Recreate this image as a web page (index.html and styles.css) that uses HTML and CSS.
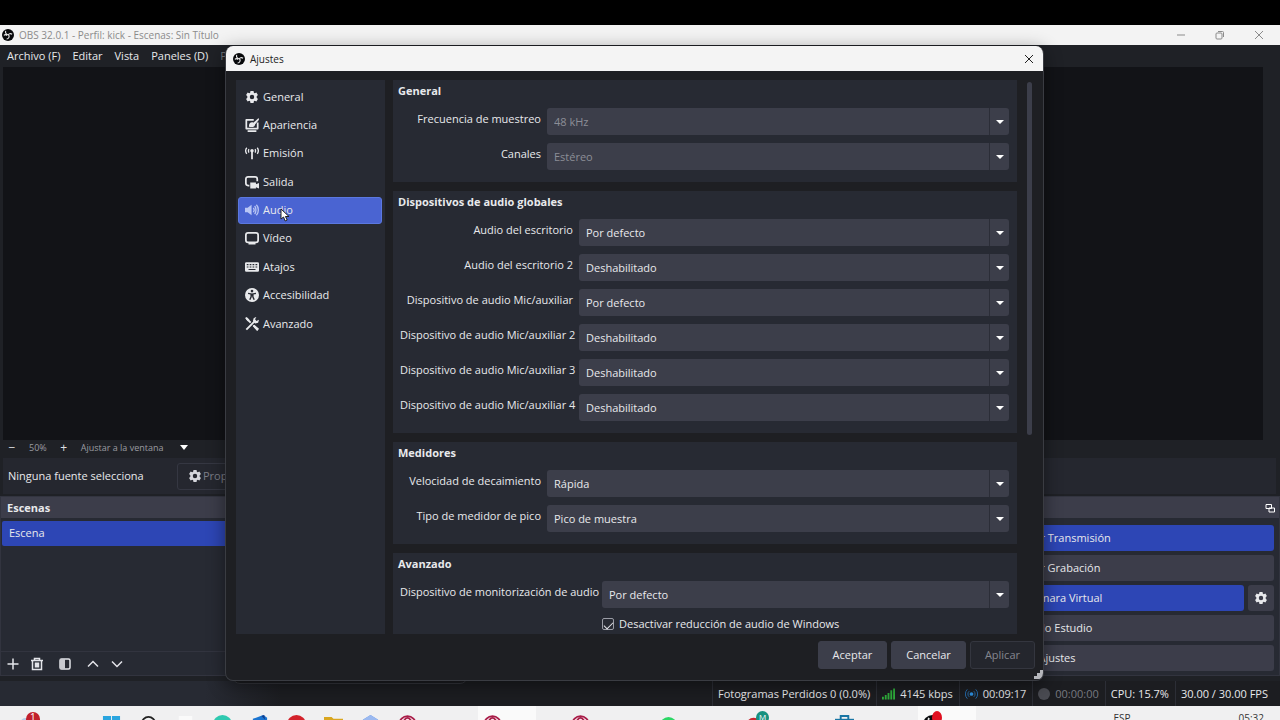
FILE: index.html
```html
<!DOCTYPE html>
<html lang="es">
<head>
<meta charset="UTF-8">
<meta name="viewport" content="width=device-width, initial-scale=1.0">
<title>OBS 32.0.1 - Ajustes</title>
<link rel="stylesheet" href="styles.css">
</head>
<body>
<svg class="defs" aria-hidden="true">
    <symbol id="gear" viewBox="1 1 14 14">
        <path fill-rule="evenodd" fill="currentColor" d="M6.200 1h3.600l.4 2 1 .5 1.900-.7 1.800 3-1.400 1.400v1.600l1.400 1.400-1.800 3-1.900-.7-1 .5-.4 2H6.200l-.4-2-1-.5-1.900.7-1.800-3 1.400-1.400V7.200L1.100 5.800l1.800-3 1.900.7 1-.5zM8 5.400a2.600 2.600 0 1 0 0 5.200 2.600 2.600 0 0 0 0-5.200z"/>
    </symbol>
    <symbol id="obs" viewBox="0 0 16 16">
        <circle cx="8" cy="8" r="8" fill="#08090b"/>
        <path fill="none" stroke="#e8e8e8" stroke-width="1.500" d="M5 2.500c-1 2.300.2 4.600 3 5.200M13.500 7c-2.200-1.500-4.800-.8-5.500 1.700M6.200 13.300c2.500-.2 4-2.500 3-5M2.500 8.500c1.200-1 3-1 4 .2"/>
    </symbol>
    <symbol id="opera" viewBox="0 0 16 16">
        <circle cx="8" cy="8" r="7" fill="#f6e6ea" stroke="#a81c48" stroke-width="1.500"/>
        <ellipse cx="8" cy="8" rx="3.500" ry="5.500" fill="none" stroke="#a81c48" stroke-width="1.500"/>
    </symbol>
</svg>

<div class="letterbox"></div>

<header class="titlebar">
    <svg class="logo"><use href="#obs"/></svg>
    <span class="titlebar-text">OBS 32.0.1 - Perfil: kick - Escenas: Sin Título</span>
    <div class="window-buttons">
        <button aria-label="Minimizar"><svg viewBox="0 0 10 10"><path d="M1 5h8"/></svg></button>
        <button aria-label="Restaurar"><svg viewBox="0 0 10 10"><rect x="1" y="3" width="6" height="6" rx="1"/><path d="M3 1.500h4.500a1 1 0 0 1 1 1V7"/></svg></button>
        <button aria-label="Cerrar"><svg viewBox="0 0 10 10"><path d="M1 1l8 8M9 1L1 9"/></svg></button>
    </div>
</header>

<div class="main-window">
    <nav class="menubar">
        <a href="#">Archivo (F)</a>
        <a href="#">Editar</a>
        <a href="#">Vista</a>
        <a href="#">Paneles (D)</a>
        <a href="#" class="dim">Perfil</a>
    </nav>

    <div class="preview"></div>

    <div class="zoombar">
        <button aria-label="Alejar">−</button>
        <span>50%</span>
        <button aria-label="Acercar">+</button>
        <span class="zoom-mode">Ajustar a la ventana</span>
        <i class="arrow"></i>
    </div>

    <div class="context">
        <span class="context-text">Ninguna fuente selecciona</span>
        <button class="context-button"><svg><use href="#gear"/></svg>Propiedades</button>
    </div>

    <div class="docks">
        <section class="dock scenes">
            <h2>Escenas</h2>
            <ul>
                <li>Escena</li>
            </ul>
            <div class="dock-tools">
                <button aria-label="Añadir"><svg viewBox="0 0 14 14"><path d="M7 1.500v11M1.500 7h11"/></svg></button>
                <button aria-label="Eliminar"><svg viewBox="0 0 14 14"><path d="M1 3.500h12M4.500 3V1.500h5V3M2.500 4v8.500h9V4M5.500 5.500v5M7 5.500v5M8.500 5.500v5"/></svg></button>
                <button aria-label="Filtros" class="wide-tool"><svg viewBox="0 0 14 14"><rect x="2" y="2" width="10" height="10" rx="1.500"/><path fill="#c9cad0" stroke="none" d="M2 2h5v10H2z"/></svg></button>
                <button aria-label="Subir"><svg viewBox="0 0 14 14"><path d="M2 9.500l5-5 5 5"/></svg></button>
                <button aria-label="Bajar"><svg viewBox="0 0 14 14"><path d="M2 4.500l5 5 5-5"/></svg></button>
            </div>
        </section>
        <section class="dock mixer"></section>
        <section class="dock controls">
            <h2>Controles
                <svg class="popout" viewBox="0 0 10 10"><path d="M1 1.500h5.500v4H1zM4 5h5.500v4H4z"/></svg>
            </h2>
            <div class="control-list">
                <button class="on">Detener Transmisión</button>
                <button>Iniciar Grabación</button>
                <div class="control-row">
                    <button class="on">Detener Cámara Virtual</button>
                    <button class="square" aria-label="Configurar cámara virtual"><svg><use href="#gear"/></svg></button>
                </div>
                <button>Modo Estudio</button>
                <button>Ajustes</button>
            </div>
        </section>
    </div>

    <footer class="statusbar">
        <span>Fotogramas Perdidos 0 (0.0%)</span>
        <span><svg class="bars" viewBox="0 0 14 12"><path d="M0 9h2v3H0zM3 7h2v5H3zM6 5h2v7H6zM9 2h2v10H9zM12 0h2v12h-2z"/></svg>4145 kbps</span>
        <span><svg class="live" viewBox="0 0 14 12"><circle cx="7" cy="6" r="2"/><path d="M4.500 3a4 4 0 0 0 0 6M9.500 3a4 4 0 0 1 0 6M2.500 1a7 7 0 0 0 0 10M11.500 1a7 7 0 0 1 0 10"/></svg>00:09:17</span>
        <span class="idle"><i class="dot"></i>00:00:00</span>
        <span>CPU: 15.7%</span>
        <span>30.00 / 30.00 FPS</span>
    </footer>
</div>

<div class="taskbar">
    <div class="weather"><svg viewBox="0 0 24 16"><path fill="#b7cbe6" d="M1 16c0-5 3-9 6-9s6 3 7 9z"/><circle cx="15" cy="8" r="7" fill="#c11f2b"/></svg><span class="count">1</span></div>
    <div class="apps">
        <span><svg viewBox="0 0 20 20"><path fill="#2aa5df" d="M1 1h8.500v8.500H1zM10.500 1H19v8.500h-8.500zM1 10.500h8.500V19H1zM10.500 10.500H19V19h-8.500z"/></svg></span>
        <span><svg viewBox="0 0 20 20"><circle cx="10" cy="9" r="7" fill="none" stroke="#222" stroke-width="2"/></svg></span>
        <span><svg viewBox="0 0 20 20"><rect x="3" y="1" width="14" height="16" fill="#fafafa"/></svg></span>
        <span><svg viewBox="0 0 20 20"><circle cx="10" cy="10" r="10" fill="#2fc9b0"/><path fill="#2b8bd0" d="M0 10c3-6 12-6 15 0z"/></svg></span>
        <span><svg viewBox="0 0 20 20"><path fill="#1b74d0" d="M3 4l11-4 4 3v17H3z"/><path fill="#123d8c" d="M12 1l3-1 1 5z"/></svg></span>
        <span><svg viewBox="0 0 20 20"><circle cx="10" cy="10" r="10" fill="#d3222b"/></svg></span>
        <span><svg viewBox="0 0 20 20"><path fill="#d9a620" d="M0 2h8l2 2h10v16H0z"/><path fill="#f3cb50" d="M0 6h20v14H0z"/></svg></span>
        <span><svg viewBox="0 0 20 20"><path fill="#5c8fe0" d="M10 0l8 5v10l-8 5-8-5V5z"/><path fill="#9bb9f0" d="M10 0l8 5-8 4-8-4z"/></svg></span>
        <span><svg><use href="#opera"/></svg></span>
    </div>
    <div class="apps open">
        <span class="active"><svg><use href="#opera"/></svg></span>
        <span><svg><use href="#opera"/></svg></span>
        <span><svg viewBox="0 0 20 20"><circle cx="10" cy="11" r="9" fill="#2bd765"/></svg></span>
        <span><svg viewBox="0 0 20 20"><circle cx="7" cy="11" r="8" fill="#c9272f"/></svg><b class="badge">M</b></span>
        <span><svg viewBox="0 0 20 20"><path fill="#1976a5" d="M0 4h20v14H0z"/><path fill="none" stroke="#1976a5" stroke-width="2" d="M6 5V1h8v4"/></svg></span>
        <span class="active"><svg><use href="#obs"/></svg><b class="badge rec"></b></span>
    </div>
    <div class="tray"><span>ESP</span><span>05:32</span></div>
</div>

<div class="shadow-window"></div>

<div class="dialog" role="dialog" aria-label="Ajustes">
    <header class="dialog-title">
        <svg class="logo"><use href="#obs"/></svg>
        <span>Ajustes</span>
        <button aria-label="Cerrar"><svg viewBox="0 0 10 10"><path d="M1 1l8 8M9 1L1 9"/></svg></button>
    </header>

    <div class="dialog-body">
        <nav class="sections">
            <div class="section-list">
                <a href="#"><svg viewBox="0 0 14 14"><use href="#gear" x="1" y="1" width="12" height="12"/></svg>General</a>
                <a href="#"><svg viewBox="0 0 16 16"><path fill="none" stroke="currentColor" stroke-width="2" stroke-linejoin="round" d="M10 2H1.500v10h13V5"/><path fill="currentColor" d="M3 14h10v2H3zM15.500 0L16 2l-5 6-2-2zM4.500 9c0-3 2-5 5-4l2 2c0 3-3 4-7 3z"/></svg>Apariencia</a>
                <a href="#"><svg viewBox="0 0 16 16"><g fill="none" stroke="currentColor" stroke-width="1.500"><path d="M2 2a6 6 0 0 0 0 7M14 2a6 6 0 0 1 0 7M4.500 3.500a4 4 0 0 0 0 4M11.500 3.500a4 4 0 0 1 0 4"/><path stroke-width="2" d="M8 6v9"/></g><circle cx="8" cy="5.500" r="2" fill="currentColor"/></svg>Emisión</a>
                <a href="#"><svg viewBox="0 0 16 16"><path fill="none" stroke="currentColor" stroke-width="2" d="M5 12H3.500A2.500 2.500 0 0 1 1 9.500v-5A2.500 2.500 0 0 1 3.500 2h8A2.500 2.500 0 0 1 14 4.500V7"/><path fill="currentColor" d="M6 8.500h6.500v2L16 9v6.500L12.500 14v1.500H6z"/></svg>Salida</a>
                <a href="#" class="current"><svg viewBox="0 0 16 16"><path fill="currentColor" d="M0 5.500h3L7.500 2v12L3 10.500H0z"/><path fill="none" stroke="currentColor" stroke-width="1.500" d="M9.500 5.500a4 4 0 0 1 0 5M11 3.500c2 2 2 7 0 9M13 2c3 3 3 9 0 12"/></svg>Audio</a>
                <a href="#"><svg viewBox="0 0 16 16"><rect x="1" y="2" width="14" height="11" rx="2.500" fill="none" stroke="currentColor" stroke-width="2"/><path fill="currentColor" d="M4 13h8v2.500H4z"/></svg>Vídeo</a>
                <a href="#"><svg viewBox="0 0 16 16"><path fill="currentColor" fill-rule="evenodd" d="M1.500 2.500h13A1.500 1.500 0 0 1 16 4v8a1.500 1.500 0 0 1-1.500 1.500h-13A1.500 1.500 0 0 1 0 12V4a1.500 1.500 0 0 1 1.500-1.500zM2 4.500V6h2V4.500zm3.300 0V6h2V4.500zm3.300 0V6h2V4.500zm3.400 0V6h2V4.500zM2 7.300v1.400h2V7.300zm3.300 0v1.400h2V7.300zm3.300 0v1.400h2V7.300zm3.400 0v1.400h2V7.300zM4 10.300v1.200h8v-1.200z"/></svg>Atajos</a>
                <a href="#"><svg viewBox="0 0 16 16"><circle cx="8" cy="8" r="8" fill="currentColor"/><circle cx="8" cy="3.500" r="1.500" fill="#272a33"/><path fill="none" stroke="#272a33" stroke-width="1.600" d="M3.500 6.200L8 7l4.500-.8M7 7v3l-1.500 3.500M9 7v3l1.500 3.500M7 8.500h2"/></svg>Accesibilidad</a>
                <a href="#"><svg viewBox="0 0 16 16"><path fill="none" stroke="currentColor" stroke-width="2.200" d="M2 2l4.500 4.500M9.500 9.500L14.500 15M1.500 14.500l10-10"/><path fill="currentColor" d="M0 1l2-1 3 3-1.500 2zM9 4.500L10 1l3-1-1.500 2.500 1.500 2L16 3l-1 3.500-3.500 1zM9 10l2-1 5 4.500L14 16z"/></svg>Avanzado</a>
            </div>
        </nav>

        <form class="pages">
            <fieldset class="group narrow">
                <legend>General</legend>
                <div class="row">
                    <label for="rate">Frecuencia de muestreo</label>
                    <div class="combo"><select id="rate" disabled><option>48 kHz</option></select></div>
                </div>
                <div class="row">
                    <label for="channels">Canales</label>
                    <div class="combo"><select id="channels" disabled><option>Estéreo</option></select></div>
                </div>
            </fieldset>

            <fieldset class="group medium">
                <legend>Dispositivos de audio globales</legend>
                <div class="row">
                    <label for="desktop1">Audio del escritorio</label>
                    <div class="combo"><select id="desktop1"><option>Por defecto</option></select></div>
                </div>
                <div class="row">
                    <label for="desktop2">Audio del escritorio 2</label>
                    <div class="combo"><select id="desktop2"><option>Deshabilitado</option></select></div>
                </div>
                <div class="row">
                    <label for="mic1">Dispositivo de audio Mic/auxiliar</label>
                    <div class="combo"><select id="mic1"><option>Por defecto</option></select></div>
                </div>
                <div class="row">
                    <label for="mic2">Dispositivo de audio Mic/auxiliar 2</label>
                    <div class="combo"><select id="mic2"><option>Deshabilitado</option></select></div>
                </div>
                <div class="row">
                    <label for="mic3">Dispositivo de audio Mic/auxiliar 3</label>
                    <div class="combo"><select id="mic3"><option>Deshabilitado</option></select></div>
                </div>
                <div class="row">
                    <label for="mic4">Dispositivo de audio Mic/auxiliar 4</label>
                    <div class="combo"><select id="mic4"><option>Deshabilitado</option></select></div>
                </div>
            </fieldset>

            <fieldset class="group narrow">
                <legend>Medidores</legend>
                <div class="row">
                    <label for="decay">Velocidad de decaimiento</label>
                    <div class="combo"><select id="decay"><option>Rápida</option></select></div>
                </div>
                <div class="row">
                    <label for="peak">Tipo de medidor de pico</label>
                    <div class="combo"><select id="peak"><option>Pico de muestra</option></select></div>
                </div>
            </fieldset>

            <fieldset class="group wide">
                <legend>Avanzado</legend>
                <div class="row">
                    <label for="monitor">Dispositivo de monitorización de audio</label>
                    <div class="combo"><select id="monitor"><option>Por defecto</option></select></div>
                </div>
                <div class="row">
                    <span></span>
                    <div class="check">
                        <input type="checkbox" id="ducking" checked>
                        <label for="ducking">Desactivar reducción de audio de Windows</label>
                    </div>
                </div>
            </fieldset>
        </form>
        <div class="scrollbar"><div class="thumb"></div></div>
    </div>

    <footer class="dialog-footer">
        <button>Aceptar</button>
        <button>Cancelar</button>
        <button disabled>Aplicar</button>
    </footer>
    <svg class="grip" viewBox="0 0 9 9"><path d="M6 0h3v9H0V6h3V3h3z"/></svg>
    <svg class="cursor" viewBox="0 0 10 14"><path d="M1 1v10l2.500-2 1.700 4 2-1-1.800-3.500H9z"/></svg>
</div>
</body>
</html>
```
FILE: styles.css
```css
* {
    box-sizing: border-box;
}

body {
    position: relative;
    display: flex;
    flex-direction: column;
    height: 100vh;
    margin: 0;
    overflow: hidden;
    background: #000;
    color: #e8e9ec;
    font-family: "Open Sans", sans-serif;
    font-size: 11px;
    line-height: 16px;
}

button, select, input {
    margin: 0;
    font: inherit;
    color: inherit;
}

button {
    display: flex;
    align-items: center;
    justify-content: center;
    padding: 0;
    border: none;
    background: none;
}

a {
    color: inherit;
    text-decoration: none;
}

svg {
    display: block;
    flex: none;
}

.defs {
    position: absolute;
    width: 0;
    height: 0;
}

.letterbox {
    flex: none;
    height: 25px;
}

.logo {
    width: 12px;
    height: 12px;
}

/* main window */
.titlebar {
    display: flex;
    flex: none;
    align-items: center;
    gap: 5px;
    height: 20px;
    padding-left: 2px;
    background: #f3f3f3;
    color: #8b8b8b;
    font-size: 10px;
}

.window-buttons {
    display: flex;
    margin-left: auto;
    padding-right: 2px;
}

.window-buttons button {
    width: 39px;
    height: 20px;
}

.window-buttons svg, .dialog-title button svg {
    width: 10px;
    height: 10px;
    fill: none;
    stroke: currentColor;
}

.main-window {
    display: flex;
    flex: 1;
    flex-direction: column;
    min-height: 0;
    background: #1f2126;
}

.menubar {
    display: flex;
    gap: 12px;
    height: 22px;
    padding: 3px 7px;
}

.menubar .dim {
    color: #777980;
}

.preview {
    flex: 1;
    margin: 0 17px 0 3px;
    background: #121317;
}

.zoombar {
    display: flex;
    align-items: center;
    gap: 13px;
    height: 15px;
    margin-bottom: 3px;
    padding-left: 8px;
    color: #9b9ca1;
    font-size: 9px;
}

.zoombar button {
    width: 8px;
    color: #e0e0e4;
    font-size: 12px;
}

.zoom-mode {
    margin-right: 4px;
}

.arrow {
    border: 4px solid transparent;
    border-top: 5px solid #fff;
    border-bottom: none;
}

.context {
    display: flex;
    align-items: center;
    height: 36px;
    margin: 0 4px 2px 3px;
    padding-left: 5px;
    background: #25272f;
}

.context-text {
    width: 169px;
}

.context-button {
    gap: 2px;
    height: 27px;
    padding: 0 11px;
    border: 1px solid #353742;
    border-radius: 3px;
    color: #7c7e87;
}

.context-button svg {
    width: 12px;
    height: 12px;
    color: #d5d6dc;
}

.docks {
    display: flex;
    gap: 4px;
    height: 180px;
    margin-bottom: 5px;
}

.dock {
    display: flex;
    flex-direction: column;
    border: 1px solid #32343f;
    background: #272a33;
}

.scenes {
    width: 260px;
}

.mixer {
    flex: 1;
}

.controls {
    width: 446px;
}

.dock h2 {
    display: flex;
    align-items: center;
    justify-content: space-between;
    height: 21px;
    margin: 0;
    padding: 0 4px 0 6px;
    background: #3c3d4a;
    font-size: 11px;
}

.scenes ul {
    flex: 1;
    margin: 3px 1px 0;
    padding: 0;
    list-style: none;
}

.scenes li {
    height: 25px;
    padding: 4px 7px;
    border-radius: 2px;
    background: #2d46b5;
}

.dock-tools {
    display: flex;
    gap: 10px;
    align-items: center;
    height: 24px;
    padding-left: 5px;
    border-top: 1px solid #32343f;
}

.dock-tools svg {
    width: 14px;
    height: 14px;
    fill: none;
    stroke: #e4e5ea;
    stroke-width: 1.5;
}

.dock-tools .wide-tool {
    padding: 0 4px;
}

.popout {
    width: 10px;
    height: 10px;
    fill: none;
    stroke: #fff;
}

.control-list {
    display: flex;
    flex-direction: column;
    gap: 4px;
    padding: 7px 5px 0;
}

.control-row {
    display: flex;
    gap: 4px;
}

.control-list button {
    flex: 1 0 auto;
    height: 26px;
    border-radius: 3px;
    background: #3c3d4a;
}

.control-list .on {
    background: #2d46b5;
}

.control-list .square {
    flex: none;
    width: 26px;
}

.square svg {
    width: 12px;
    height: 12px;
}

.statusbar {
    display: flex;
    justify-content: flex-end;
    height: 25px;
    padding-right: 6px;
    background: linear-gradient(to right, #272a33 16%, #1c1d21 22%);
}

.statusbar span {
    display: flex;
    align-items: center;
    gap: 5px;
    padding: 0 6px 0 5px;
    border-left: 1px solid #2c2e36;
}

.statusbar .idle {
    color: #777980;
}

.bars {
    width: 13px;
    height: 12px;
    fill: #2fae3c;
}

.live {
    width: 13px;
    height: 12px;
    fill: #2d8fe0;
}

.live path {
    fill: none;
    stroke: #2771b4;
}

.dot {
    width: 12px;
    height: 12px;
    border-radius: 50%;
    background: #4a4b52;
}

/* windows taskbar, cut by the bottom of the screen */
.taskbar {
    display: flex;
    flex: none;
    height: 14px;
    overflow: hidden;
    background: #f0f0f1;
    color: #333;
    font-size: 10px;
}

.weather {
    position: relative;
    width: 93px;
    padding: 5px 0 0 18px;
}

.weather svg {
    width: 24px;
    height: 16px;
}

.weather .count {
    position: absolute;
    top: 3px;
    left: 30px;
    color: #fff;
}

.apps {
    display: flex;
    width: 355px;
}

.apps span {
    position: relative;
    display: flex;
    justify-content: center;
    width: 37px;
    height: 28px;
    padding-top: 9px;
}

.apps svg {
    width: 19px;
    height: 19px;
}

.apps.open {
    width: 528px;
}

.apps.open span {
    width: 88px;
}

.apps.open .active {
    background: linear-gradient(to right, transparent 30px, #fafafa 30px);
}

.badge {
    position: absolute;
    top: 5px;
    left: 44px;
    width: 13px;
    height: 13px;
    border-radius: 50%;
    background: #16917f;
    color: #fff;
    font-size: 8px;
    font-weight: normal;
    line-height: 12px;
    text-align: center;
}

.rec {
    width: 10px;
    background: #e01020;
}

.tray {
    display: flex;
    gap: 108px;
    margin-left: auto;
    padding: 4px 16px 0 0;
}

/* window edge showing under the dialog */
.shadow-window {
    position: absolute;
    right: 812px;
    bottom: 36px;
    left: 232px;
    height: 24px;
    border: 1px solid #33353b;
    border-radius: 8px;
    background: #1b1c20;
}

/* settings dialog */
.dialog {
    position: absolute;
    top: 46px;
    right: 236px;
    bottom: 39px;
    left: 225px;
    display: flex;
    flex-direction: column;
    overflow: hidden;
    border: 1px solid #3a3c42;
    border-top: none;
    border-radius: 8px;
    background: #1e1f23;
    box-shadow: 0 4px 18px rgba(0, 0, 0, 0.45);
}

.dialog-title {
    display: flex;
    flex: none;
    align-items: center;
    gap: 5px;
    height: 25px;
    padding-left: 7px;
    background: #f4f4f4;
    color: #222;
    font-size: 10px;
}

.dialog-title button {
    width: 28px;
    height: 25px;
    margin-left: auto;
}

.dialog-body {
    display: flex;
    flex: 1;
    min-height: 0;
    padding: 9px 9px 0 10px;
}

.sections {
    width: 149px;
    margin-right: 8px;
    padding: 3px 3px 0 2px;
    background: #272a33;
}

.section-list {
    display: flex;
    flex-direction: column;
    justify-content: space-between;
    height: 254px;
}

.section-list a {
    display: flex;
    align-items: center;
    gap: 4px;
    height: 27px;
    padding-left: 7px;
    border-radius: 3px;
}

.section-list svg {
    width: 14px;
    height: 14px;
}

.section-list .current {
    padding-left: 6px;
    border: 1px solid #5b78e0;
    background: #4a64d2;
}

.current svg {
    color: #b9c6f5;
}

.pages {
    flex: 1;
    margin: 0;
    overflow: hidden;
}

.group {
    min-width: 0;
    margin: 0 0 9px;
    padding: 3px 8px 12px 7px;
    border: none;
    background: #272a33;
}

.group legend {
    float: left;
    width: 100%;
    height: 25px;
    margin-left: -2px;
    padding: 0;
    font-weight: bold;
}

.row {
    display: grid;
    clear: both;
    gap: 6px;
}

.row + .row {
    margin-top: 8px;
}

.row > label {
    padding-top: 3px;
    text-align: right;
    white-space: nowrap;
}

.narrow .row {
    grid-template-columns: 141px 1fr;
}

.medium .row {
    grid-template-columns: 173px 1fr;
}

.wide .row {
    grid-template-columns: 196px 1fr;
}

.combo {
    position: relative;
}

.combo select {
    display: block;
    width: 100%;
    height: 27px;
    padding: 0 7px;
    appearance: none;
    border: none;
    border-radius: 3px;
    background: linear-gradient(to left, transparent 19px, #2b2d37 19px, #2b2d37 20px, transparent 20px) #3c3e4a;
}

.combo select:disabled {
    color: #8c8e97;
    opacity: 1;
}

.combo::after {
    content: "";
    position: absolute;
    top: 12px;
    right: 5px;
    border: 4px solid transparent;
    border-top: 4px solid #fff;
    border-bottom: none;
}

.check {
    display: flex;
    align-items: center;
    gap: 5px;
}

.check input {
    display: grid;
    place-items: center;
    width: 12px;
    height: 12px;
    appearance: none;
    border: 1px solid #9b9da6;
    border-radius: 2px;
}

.check input:checked::before {
    content: "";
    width: 8px;
    height: 4px;
    border: solid #e4e5ea;
    border-width: 0 0 1px 1px;
    transform: rotate(-45deg);
}

.scrollbar {
    width: 5px;
    margin-right: 2px;
    margin-left: 10px;
    padding-top: 2px;
}

.thumb {
    height: 64%;
    border-radius: 3px;
    background: #3c3e4a;
}

.dialog-footer {
    display: flex;
    flex: none;
    justify-content: flex-end;
    gap: 4px;
    height: 46px;
    padding: 7px 8px 0 0;
}

.dialog-footer button {
    height: 28px;
    padding: 0 14px;
    border: 1px solid #3c3e4a;
    border-radius: 3px;
    background: #3c3e4a;
}

.dialog-footer button:disabled {
    border-color: #34363f;
    background: #24262d;
    color: #85878f;
}

.grip {
    position: absolute;
    right: 0;
    bottom: 1px;
    width: 9px;
    height: 9px;
    fill: #b5b6bb;
}

.cursor {
    position: absolute;
    top: 162px;
    left: 54px;
    width: 10px;
    height: 14px;
    fill: #fff;
    stroke: #222;
    stroke-width: 1;
}
```
